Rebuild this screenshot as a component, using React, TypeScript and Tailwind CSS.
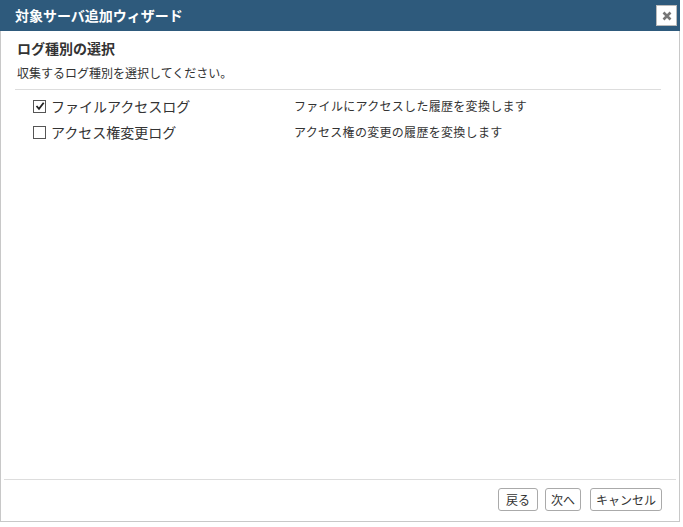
import { useState } from 'react';

const rows = [
  { label: 'ファイルアクセスログ', desc: 'ファイルにアクセスした履歴を変換します', checked: true },
  { label: 'アクセス権変更ログ', desc: 'アクセス権の変更の履歴を変換します', checked: false },
];

export default function App() {
  const [checks, setChecks] = useState(rows.map((r) => r.checked));

  return (
    <div
      className="w-[683px] h-[527px] bg-white text-[#333]"
      style={{ fontFamily: '"Noto Sans CJK JP", "Noto Sans", sans-serif' }}
    >
      <div className="w-[680px] h-[522px] flex flex-col border-l border-b border-r border-[#c8c8c8]">
        <div className="h-[31px] bg-[#2e5a7c] flex items-center justify-between pl-[15px] pr-[3px] -mx-px">
          <span className="text-white text-[14px] font-bold">対象サーバ追加ウィザード</span>
          <button className="w-[21px] h-[21px] bg-white border border-[#bbb] flex items-center justify-center">
            <svg width="10" height="10" viewBox="0 0 10 10">
              <path d="M1.5 1.5 L8.5 8.5 M8.5 1.5 L1.5 8.5" stroke="#777" strokeWidth="2.6" strokeLinecap="butt" />
            </svg>
          </button>
        </div>

        <div className="flex-1 px-[14px] pt-[7px]">
          <h2 className="text-[14px] font-bold leading-[20px] pl-[2px]">ログ種別の選択</h2>
          <p className="text-[12px] leading-[18px] mt-[6px] pl-[2px]">収集するログ種別を選択してください。</p>
          <div className="border-t border-[#ddd] mt-[7px] mr-[4px]" />
          <div className="mt-[3px] pl-[18px]">
            {rows.map((r, i) => (
              <div key={r.label} className="flex items-center h-[26px]">
                <label className="flex items-center w-[261px] cursor-pointer">
                  <span
                    className="w-[13px] h-[13px] border border-[#555] bg-white flex items-center justify-center"
                    onClick={() => setChecks(checks.map((c, j) => (j === i ? !c : c)))}
                  >
                    {checks[i] && (
                      <svg width="10" height="10" viewBox="0 0 10 10">
                        <path d="M1.5 5 L4 7.8 L8.7 1.8" stroke="#222" strokeWidth="1.8" fill="none" />
                      </svg>
                    )}
                  </span>
                  <span className="ml-[5px] text-[14px]">{r.label}</span>
                </label>
                <span className="text-[12px] tracking-[0.3px]">{r.desc}</span>
              </div>
            ))}
          </div>
        </div>

        <div className="mx-[3px] border-t border-[#ddd] flex justify-end pt-[8px] pb-[10px] pr-[14px]">
          <button className="w-[40px] h-[23px] border border-[#aaa] rounded-[3px] bg-white text-[12px] leading-none">戻る</button>
          <button className="ml-[7px] w-[36px] h-[23px] border border-[#aaa] rounded-[3px] bg-white text-[12px] leading-none">次へ</button>
          <button className="ml-[9px] w-[72px] h-[23px] border border-[#aaa] rounded-[3px] bg-white text-[12px] leading-none">キャンセル</button>
        </div>
      </div>
    </div>
  );
}
